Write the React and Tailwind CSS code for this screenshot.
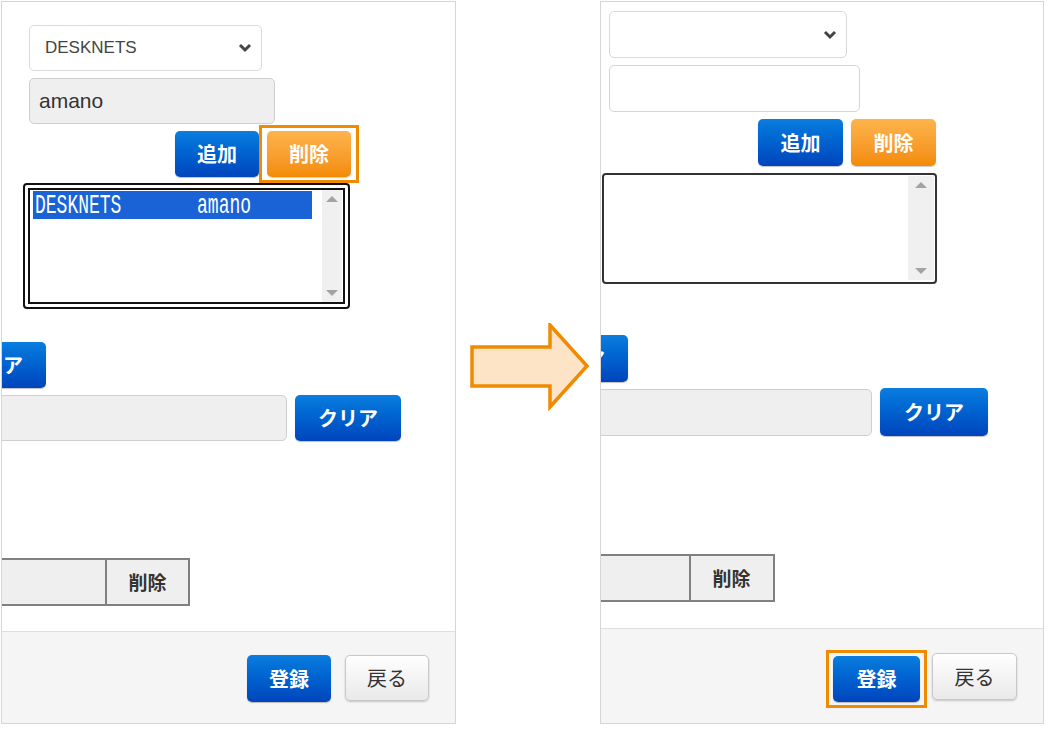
import React from "react";

const jp = { fontFamily: '"Noto Sans CJK JP", "Noto Sans", sans-serif' };

function BlueBtn({ label, className = "" }) {
  return (
    <div
      style={jp}
      className={"flex items-center justify-center rounded-[5px] bg-gradient-to-b from-[#0c7ddf] to-[#0044bd] font-bold text-[20px] text-white shadow-[0_1px_1px_rgba(0,0,0,0.25)] " + className}
    >
      {label}
    </div>
  );
}

function OrangeBtn({ label, className = "" }) {
  return (
    <div
      style={jp}
      className={"flex items-center justify-center rounded-[5px] bg-gradient-to-b from-[#fdb44b] to-[#f38b00] font-bold text-[20px] text-white shadow-[0_1px_1px_rgba(0,0,0,0.2)] " + className}
    >
      {label}
    </div>
  );
}

function GrayBtn({ label, className = "" }) {
  return (
    <div
      style={jp}
      className={"flex items-center justify-center rounded-[5px] border border-[#c8c8c8] bg-gradient-to-b from-[#ffffff] to-[#e9e9e9] text-[20px] text-[#333] shadow-[0_1px_2px_rgba(0,0,0,0.2)] " + className}
    >
      {label}
    </div>
  );
}

function Chevron() {
  return (
    <svg width="14" height="10" viewBox="0 0 14 10">
      <polyline points="2,2 7,7 12,2" fill="none" stroke="#444" strokeWidth="3" />
    </svg>
  );
}

function Scrollbar({ className = "" }) {
  return (
    <div className={"flex flex-col items-center justify-between bg-[#f0f0f0] py-[5px] " + className}>
      <svg width="12" height="7" viewBox="0 0 12 7"><polygon points="0,7 6,1 12,7" fill="#a3a3a3" /></svg>
      <svg width="12" height="7" viewBox="0 0 12 7"><polygon points="0,0 12,0 6,6" fill="#a3a3a3" /></svg>
    </div>
  );
}

function TableRow({ className = "", leftW }) {
  return (
    <div className={"flex h-[48px] border-2 border-[#808080] bg-[#efefef] " + className}>
      <div className={leftW + " border-r-2 border-[#808080]"}></div>
      <div style={jp} className="flex w-[81px] items-center justify-center text-[19px] font-bold text-[#333]">削除</div>
    </div>
  );
}

function LeftPanel() {
  return (
    <div className="flex h-[723px] w-[455px] flex-col overflow-hidden border border-[#d6d6d6] bg-white">
      <div className="flex-1">
        <div className="ml-[27px] mt-[23px] flex h-[46px] w-[233px] items-center justify-between rounded-[5px] border border-[#d9d9d9] bg-white pl-[15px] pr-[9px]">
          <span style={{ fontFamily: '"Liberation Sans", Arial, sans-serif' }} className="text-[17px] text-[#444]">DESKNETS</span>
          <Chevron />
        </div>
        <div className="ml-[27px] mt-[7px] flex h-[46px] w-[246px] items-center rounded-[5px] border border-[#cfcfcf] bg-[#efefef] pl-[9px]">
          <span style={{ fontFamily: '"Liberation Sans", Arial, sans-serif' }} className="text-[21px] text-[#333]">amano</span>
        </div>
        <div className="ml-[173px] mt-[1px] flex items-center">
          <BlueBtn label="追加" className="h-[46px] w-[84px]" />
          <div className="flex h-[58px] w-[100px] items-center justify-center border-[3px] border-[#f08a00]">
            <OrangeBtn label="削除" className="h-[46px] w-[84px]" />
          </div>
        </div>
        <div className="ml-[21px] flex h-[126px] w-[327px] rounded-[4px] border-[7px] border-double border-[#111] bg-white">
          <div className="flex-1 pl-[3px] pt-[1px]">
            <div
              style={{ fontFamily: '"Liberation Mono", "DejaVu Sans Mono", monospace' }}
              className="flex h-[28px] w-[279px] items-center whitespace-pre bg-[#1a63d6] pl-[2px] text-[18px] leading-none text-white"
            >
              <span className="inline-block scale-y-[1.5]">{"DESKNETS       amano"}</span>
            </div>
          </div>
          <Scrollbar className="mr-[1px] h-[112px] w-[20px]" />
        </div>
        <BlueBtn label="クリア" className="ml-[-62px] mt-[33px] h-[46px] w-[106px]" />
        <div className="mt-[7px] flex items-center">
          <div className="ml-[-20px] h-[46px] w-[305px] rounded-[5px] border border-[#cfcfcf] bg-[#efefef]"></div>
          <BlueBtn label="クリア" className="ml-[8px] h-[46px] w-[106px]" />
        </div>
        <TableRow className="ml-[-20px] mt-[117px] w-[208px]" leftW="w-[123px]" />
      </div>
      <div className="flex h-[92px] items-start justify-end gap-[14px] border-t border-[#dedede] bg-[#f5f5f5] pr-[26px] pt-[23px]">
        <BlueBtn label="登録" className="h-[47px] w-[84px]" />
        <GrayBtn label="戻る" className="h-[46px] w-[84px]" />
      </div>
    </div>
  );
}

function RightPanel() {
  return (
    <div className="flex h-[723px] w-[444px] flex-col overflow-hidden border border-[#d6d6d6] bg-white">
      <div className="flex-1">
        <div className="ml-[8px] mt-[9px] flex h-[47px] w-[238px] items-center justify-end rounded-[5px] border border-[#d9d9d9] bg-white pr-[9px]">
          <Chevron />
        </div>
        <div className="ml-[8px] mt-[7px] h-[47px] w-[251px] rounded-[5px] border border-[#d4d4d4] bg-white"></div>
        <div className="ml-[157px] mt-[7px] flex gap-[8px]">
          <BlueBtn label="追加" className="h-[47px] w-[85px]" />
          <OrangeBtn label="削除" className="h-[47px] w-[85px]" />
        </div>
        <div className="ml-[1px] mt-[7px] flex h-[111px] w-[335px] rounded-[4px] border-2 border-[#333] bg-white">
          <div className="flex-1"></div>
          <Scrollbar className="mr-[1px] mt-[1px] h-[104px] w-[26px]" />
        </div>
        <BlueBtn label="クリア" className="ml-[-79px] mt-[51px] h-[47px] w-[106px]" />
        <div className="mt-[6px] flex items-center">
          <div className="ml-[-20px] h-[47px] w-[291px] rounded-[5px] border border-[#cfcfcf] bg-[#efefef]"></div>
          <BlueBtn label="クリア" className="ml-[8px] h-[48px] w-[108px]" />
        </div>
        <TableRow className="ml-[-20px] mt-[118px] w-[194px]" leftW="w-[108px]" />
      </div>
      <div className="flex h-[95px] items-start justify-end border-t border-[#dedede] bg-[#f5f5f5] pr-[26px] pt-[21px]">
        <div className="flex h-[58px] w-[101px] items-center justify-center border-[3px] border-[#f08a00]">
          <BlueBtn label="登録" className="h-[46px] w-[87px]" />
        </div>
        <GrayBtn label="戻る" className="ml-[5px] mt-[3px] h-[47px] w-[85px]" />
      </div>
    </div>
  );
}

function Arrow() {
  return (
    <svg width="120" height="88" viewBox="0 0 120 88">
      <polygon
        points="2,24 80,24 80,2 117,43 80,84 80,63 2,63"
        fill="#fde4c6"
        stroke="#f08a00"
        strokeWidth="3.5"
        strokeLinejoin="miter"
      />
    </svg>
  );
}

export default function App() {
  return (
    <div className="flex h-[731px] w-[1051px] bg-white pl-[1px] pt-[1px]">
      <LeftPanel />
      <div className="w-[144px] pl-[14px] pt-[322px]">
        <Arrow />
      </div>
      <RightPanel />
    </div>
  );
}
